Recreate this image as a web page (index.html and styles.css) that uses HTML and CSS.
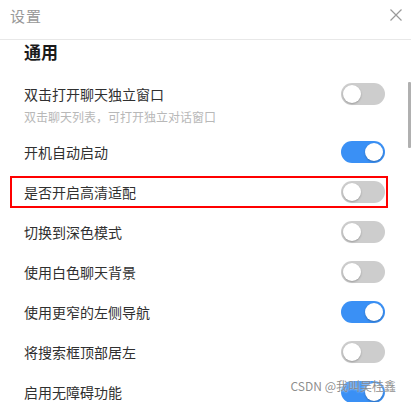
FILE: index.html
```html
<!DOCTYPE html>
<html lang="zh">
<head>
<meta charset="utf-8">
<link rel="stylesheet" href="styles.css">
</head>
<body>
<div class="dialog">
  <div class="header">
    <span class="title">设置</span>
    <svg class="close" width="12" height="12" viewBox="0 0 12 12"><path d="M0.5 0.5L11.5 11.5M11.5 0.5L0.5 11.5" stroke="#9a9a9a" stroke-width="1.2" fill="none"/></svg>
  </div>
  <div class="content">
    <div class="section">通用</div>
    <div class="row first">
      <div class="label">
        <div class="main">双击打开聊天独立窗口</div>
        <div class="sub">双击聊天列表，可打开独立对话窗口</div>
      </div>
      <span class="switch"></span>
    </div>
    <div class="row"><span class="text">开机自动启动</span><span class="switch on"></span></div>
    <div class="row marked"><span class="text">是否开启高清适配</span><span class="switch"></span></div>
    <div class="row"><span class="text">切换到深色模式</span><span class="switch"></span></div>
    <div class="row"><span class="text">使用白色聊天背景</span><span class="switch"></span></div>
    <div class="row"><span class="text">使用更窄的左侧导航</span><span class="switch on"></span></div>
    <div class="row"><span class="text">将搜索框顶部居左</span><span class="switch"></span></div>
    <div class="row"><span class="text">启用无障碍功能</span><span class="switch on"></span></div>
  </div>
  <div class="scrollbar"></div>
  <div class="watermark">CSDN @我叫吴桂鑫</div>
</div>
</body>
</html>
```
FILE: styles.css
```css
html, body {
  margin: 0;
  padding: 0;
  background: #fff;
}
body {
  font-family: "Microsoft YaHei", "Noto Sans CJK SC", "Liberation Sans", sans-serif;
  color: #303030;
}
.dialog {
  position: relative;
  width: 411px;
  height: 402px;
  overflow: hidden;
}
.header {
  height: 39px;
  border-bottom: 1px solid #e8e8e8;
  display: flex;
  align-items: center;
  justify-content: space-between;
  padding: 0 9px 0 10px;
  box-sizing: border-box;
}
.header {
  height: 40px;
}
.title {
  font-size: 15px;
  color: #999;
  margin-top: -9px;
  letter-spacing: 1px;
}
.close {
  margin-top: -9px;
}
.content {
  padding: 0 26px 0 24px;
}
.section {
  font-size: 17px;
  font-weight: bold;
  line-height: 24px;
  color: #1a1a1a;
}
.row {
  display: flex;
  align-items: center;
  justify-content: space-between;
  height: 40px;
  font-size: 14px;
}
.row.first {
  height: auto;
  align-items: flex-start;
  padding: 20px 0 6px;
}
.main {
  line-height: 20px;
}
.sub {
  font-size: 12px;
  line-height: 18px;
  margin-top: 4px;
  color: #b8b8b8;
}
.row.first .switch {
  margin-top: -1px;
}
.row.marked {
  height: 32px;
  margin: 4px -3px 4px -14px;
  padding: 0 1px 0 12px;
  border: 2px solid #f00;
  box-sizing: border-box;
}
.switch {
  position: relative;
  width: 44px;
  height: 22px;
  border-radius: 11px;
  background: #cdcdcd;
  flex: none;
}
.switch::after {
  content: "";
  position: absolute;
  top: 2px;
  left: 2px;
  width: 18px;
  height: 18px;
  border-radius: 50%;
  background: #fff;
  box-shadow: 0 1px 2px rgba(0, 0, 0, 0.25);
}
.switch.on {
  background: #3a90f5;
}
.switch.on::after {
  left: 24px;
}
.scrollbar {
  position: absolute;
  right: 0;
  top: 82px;
  width: 3px;
  height: 66px;
  background: #b0b0b0;
  border-radius: 1px;
}
.watermark {
  position: absolute;
  right: 15px;
  top: 377px;
  font-size: 12px;
  line-height: 18px;
  color: rgba(120, 120, 120, 0.85);
  text-shadow: 0 0 2px #fff;
}
```
